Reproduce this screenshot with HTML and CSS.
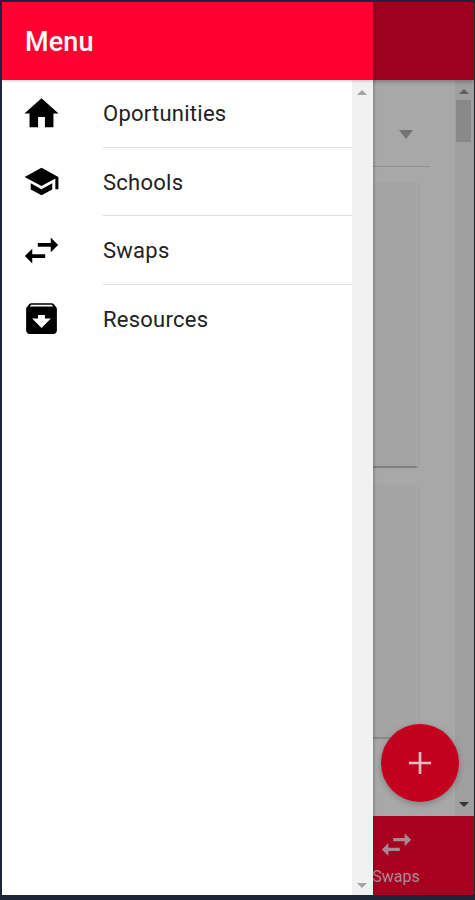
FILE: index.html
```html
<!DOCTYPE html>
<html lang="en">
<head>
  <meta charset="UTF-8" />
  <title>Menu</title>
  <link rel="stylesheet" href="styles.css">
</head>
<body>
  <div class="screen">

    <div class="page">
      <div class="page-header"></div>
      <div class="page-main">
        <div class="page-content">
          <div class="picker"><span class="picker-arrow"></span></div>
          <div class="card card-first"></div>
          <div class="card card-second"></div>
        </div>
        <div class="scrollbar page-scrollbar">
          <span class="arrow-up"></span>
          <span class="thumb"></span>
          <span class="arrow-down"></span>
        </div>
      </div>
      <div class="tabbar">
        <div class="tab">
          <svg class="tab-icon" viewBox="0 0 24 24"><path d="M6.99 11L3 15l3.99 4v-3H14v-2H6.99v-3zM21 9l-3.99-4v3H10v2h7.01v3L21 9z"/></svg>
          <span>Swaps</span>
        </div>
      </div>
    </div>

    <div class="scrim"></div>

    <button class="fab">
      <svg viewBox="0 0 24 24"><path d="M19 12.85h-6.15V19h-1.7v-6.15H5v-1.7h6.15V5h1.7v6.15H19v1.7z"/></svg>
    </button>

    <div class="drawer">
      <div class="drawer-header">Menu</div>
      <div class="drawer-body">
        <ul class="menu">
          <li class="menu-item">
            <svg class="menu-icon" viewBox="0 0 24 24"><path d="M10 20v-6h4v6h5v-8h3L12 3 2 12h3v8z"/></svg>
            <span class="menu-label">Oportunities</span>
          </li>
          <li class="menu-item">
            <svg class="menu-icon icon-school" viewBox="0 0 24 24"><path d="M5 13.18v4L12 21l7-3.82v-4L12 17l-7-3.82zM12 3L1 9l11 6 9-4.91V17h2V9L12 3z"/></svg>
            <span class="menu-label">Schools</span>
          </li>
          <li class="menu-item">
            <svg class="menu-icon icon-swap" viewBox="0 0 24 24"><path d="M6.99 11L3 15l3.99 4v-3H14v-2H6.99v-3zM21 9l-3.99-4v3H10v2h7.01v3L21 9z"/></svg>
            <span class="menu-label">Swaps</span>
          </li>
          <li class="menu-item">
            <svg class="menu-icon" viewBox="0 0 24 24"><path d="M20.54 5.23l-1.39-1.68C18.88 3.21 18.47 3 18 3H6c-.47 0-.88.21-1.16.55L3.46 5.23C3.17 5.57 3 6.02 3 6.5V19c0 1.1.9 2 2 2h14c1.1 0 2-.9 2-2V6.5c0-.48-.17-.93-.46-1.27zM12 17.5L6.5 12H10v-2h4v2h3.5L12 17.5zM5.12 5l.81-1h12l.94 1H5.12z"/></svg>
            <span class="menu-label">Resources</span>
          </li>
        </ul>
        <div class="scrollbar drawer-scrollbar">
          <span class="arrow-up"></span>
          <span class="arrow-down"></span>
        </div>
      </div>
    </div>

  </div>
</body>
</html>
```

FILE: styles.css
```css
* {
  box-sizing: border-box;
}

html, body {
  height: 100%;
}

body {
  margin: 0;
  overflow: hidden;
  font-family: Roboto, sans-serif;
  background: #1d2433;
}

.screen {
  position: relative;
  width: 472px;
  height: 893px;
  margin: 2px 0 0 2px;
  background: #fff;
  overflow: hidden;
}

/* page behind the drawer */
.page {
  height: 100%;
  display: flex;
  flex-direction: column;
}

.page-header {
  position: relative;
  height: 78px;
  background: #f2002d;
  box-shadow: 0 2px 4px rgba(0, 0, 0, 0.25);
}

.page-main {
  flex: 1;
  display: flex;
  min-height: 0;
  background: #fff;
}

.page-content {
  flex: 1;
  padding-left: 371px;
}

.picker {
  width: 57px;
  height: 87px;
  border-bottom: 1px solid #dcdcdc;
  display: flex;
  justify-content: flex-end;
  align-items: flex-start;
  padding: 50px 17px 0 0;
}

.picker-arrow {
  width: 0;
  height: 0;
  border-left: 7.5px solid transparent;
  border-right: 7.5px solid transparent;
  border-top: 9px solid #b0b0b0;
}

.card {
  width: 45px;
  border-right: 2px solid #fff;
  background: #f9f9f9;
  box-shadow: 1px 0 1px rgba(0, 0, 0, 0.04);
}

.card-first {
  height: 286px;
  margin-top: 15px;
  border-bottom: 2px solid #c4c4c4;
}

.card-second {
  height: 254px;
  margin-top: 17px;
  border-bottom: 2px solid #d0d0d0;
}

.scrollbar {
  display: flex;
  flex-direction: column;
  align-items: center;
  justify-content: space-between;
}

.page-scrollbar {
  width: 19px;
  padding: 9px 2px 9px 0;
  background: #f1f1f1;
}

.thumb {
  width: 15px;
  height: 42px;
  margin: 6px 0 auto;
  background: #d0d0d0;
}

.drawer-scrollbar {
  width: 21px;
  padding: 10px 1px 7px 0;
  background: #f1f1f1;
}

.arrow-up, .arrow-down {
  width: 0;
  height: 0;
  border-left: 5px solid transparent;
  border-right: 5px solid transparent;
}

.arrow-up {
  border-bottom: 5px solid #a3a3a3;
}

.arrow-down {
  border-top: 5px solid #a3a3a3;
}

.page-scrollbar .arrow-down {
  border-top-color: #505050;
}

.page-scrollbar .arrow-up {
  border-bottom-color: #909090;
}

.tabbar {
  height: 79px;
  padding-left: 370px;
  background: #ff0030;
}

.tab {
  width: 48px;
  padding-top: 9px;
  display: flex;
  flex-direction: column;
  align-items: center;
  gap: 3px;
  color: #ffd0e0;
  font-size: 16px;
}

.tab-icon {
  width: 39px;
  height: 39px;
  fill: #ffd0e0;
}

.scrim {
  position: absolute;
  inset: 0;
  background: rgba(0, 0, 0, 0.34);
}

.fab {
  position: absolute;
  left: 379px;
  top: 722px;
  width: 78px;
  height: 78px;
  padding: 20px;
  border: none;
  border-radius: 50%;
  background: #c4001f;
  box-shadow: 0 2px 6px rgba(0, 0, 0, 0.25);
}

.fab svg {
  display: block;
  width: 38px;
  height: 38px;
  fill: #e6bcc4;
}

/* drawer */
.drawer {
  position: absolute;
  left: 0;
  top: 0;
  bottom: 0;
  width: 371px;
  display: flex;
  flex-direction: column;
  background: #fff;
  box-shadow: 1px 0 3px rgba(0, 0, 0, 0.25);
}

.drawer-header {
  position: relative;
  height: 78px;
  padding: 2px 0 0 23px;
  display: flex;
  align-items: center;
  background: #ff0030;
  color: #fff;
  font-size: 27px;
  font-weight: 500;
  letter-spacing: 0.1px;
  box-shadow: 0 1px 3px rgba(0, 0, 0, 0.2);
}

.drawer-body {
  flex: 1;
  display: flex;
  min-height: 0;
}

.menu {
  flex: 1;
  margin: -1px 0 0;
  padding: 0;
  list-style: none;
}

.menu-item {
  height: 68.5px;
  display: flex;
  align-items: center;
  padding-left: 19px;
}

.menu-icon {
  flex: none;
  width: 41px;
  height: 41px;
  margin-right: 41px;
}

.icon-school {
  transform: scale(0.9);
}

.icon-swap {
  transform: scale(1.08);
}

.menu-label {
  flex: 1;
  align-self: stretch;
  display: flex;
  align-items: center;
  padding-top: 2px;
  border-bottom: 1px solid #dedede;
  color: #222;
  font-size: 22px;
  letter-spacing: 0.25px;
}

.menu-item:last-child .menu-label {
  border-bottom: none;
}
```
